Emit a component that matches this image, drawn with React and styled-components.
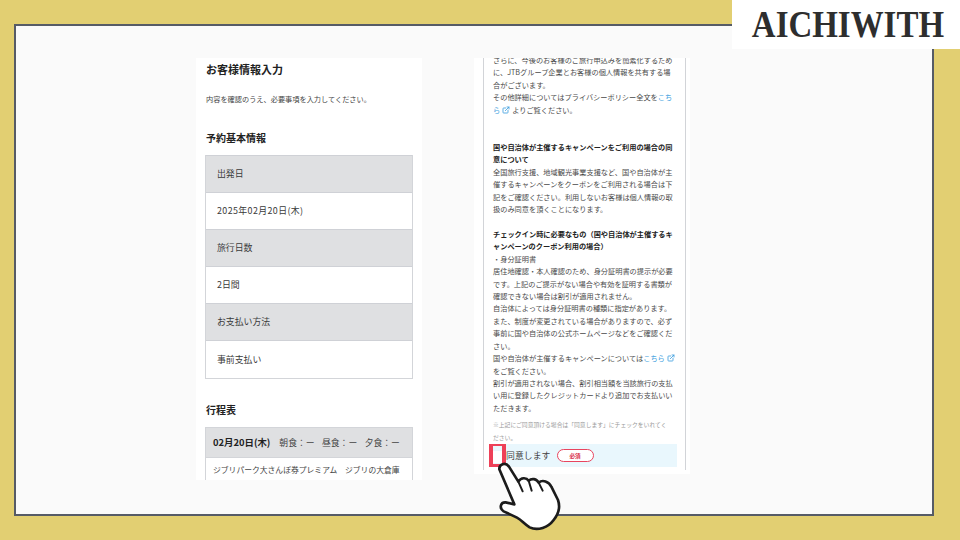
import React from "react";
import styled, { createGlobalStyle } from "styled-components";
import { ExternalLink } from "lucide-react";

const GlobalStyle = createGlobalStyle`
  * {
    box-sizing: border-box;
  }

  html,
  body {
    margin: 0;
    width: 960px;
    height: 540px;
    overflow: hidden;
    background-color: #e2cf72;
    font-family: "Noto Sans CJK JP", "Noto Sans", sans-serif;
  }
`;

const Page = styled.div`
  position: relative;
  width: 960px;
  height: 540px;
  padding: 24px 26px 24px 14px;
`;

const Frame = styled.div`
  position: relative;
  width: 100%;
  height: 100%;
  display: flex;
  align-items: flex-start;
  gap: 52px;
  padding: 32px 0 0 180px;
  background-color: #fafafa;
  border: 2px solid #565b66;
`;

const LogoBox = styled.div`
  position: absolute;
  top: 0;
  right: 0;
  width: 228px;
  height: 49px;
  display: flex;
  align-items: center;
  justify-content: center;
  background-color: #ffffff;
`;

const LogoText = styled.span`
  margin-left: 4px;
  font-family: "Liberation Serif", serif;
  font-size: 37px;
  font-weight: 700;
  line-height: 1;
  color: #2e2e2e;
  transform: scaleX(0.89);
`;

const LeftPanel = styled.section`
  width: 226px;
  height: 422px;
  padding: 0 9px;
  overflow: hidden;
  background-color: #ffffff;
`;

const PageTitle = styled.h1`
  margin: 2px 0 0 1px;
  font-size: 11px;
  line-height: 18px;
  font-weight: 700;
  color: #222222;
`;

const Lead = styled.p`
  margin: 14px 0 0 1px;
  font-size: 7.2px;
  line-height: 14px;
  color: #444444;
`;

const SectionTitle = styled.h2`
  margin: ${(props) => props.$top} 0 0 1px;
  font-size: 10px;
  line-height: 16px;
  font-weight: 700;
  color: #222222;
`;

const InfoTable = styled.div`
  margin-top: 9px;
  width: 208px;
  border: 1px solid #d3d5d9;
  border-top: 0;
`;

const InfoRow = styled.div`
  height: 37.1px;
  display: flex;
  align-items: center;
  padding: 0 0 1px 11px;
  font-size: 8.9px;
  letter-spacing: ${(props) => props.$spacing || "0"};
  color: #3a3a3a;
  border-top: 1px solid #cfd1d6;
  background-color: ${(props) => (props.$head ? "#dfe0e2" : "#ffffff")};
`;

const ScheduleHead = styled.div`
  margin-top: 9px;
  width: 208px;
  height: 30px;
  display: flex;
  align-items: center;
  gap: 9px;
  padding-left: 7px;
  background-color: #dfe0e2;
  border: 1px solid #d3d5d9;
  border-bottom: 0;
  white-space: nowrap;
`;

const ScheduleDate = styled.strong`
  font-size: 9.4px;
  font-weight: 700;
  color: #222222;
`;

const Meals = styled.span`
  font-size: 8.8px;
  color: #444444;
  word-spacing: 5.5px;
`;

const ScheduleBody = styled.div`
  width: 208px;
  height: 30px;
  padding: 5px 0 0 7px;
  border: 1px solid #d3d5d9;
  border-bottom: 0;
  font-size: 7.8px;
  line-height: 14px;
  color: #444444;
  white-space: nowrap;
`;

const RightPanel = styled.section`
  width: 216px;
  height: 416px;
  padding-left: 9px;
  padding-right: 4px;
  overflow: hidden;
  background-color: #ffffff;
`;

const TermsBox = styled.div`
  height: 100%;
  padding: 0 8px 0 9px;
  border-left: 1px solid #d2d4d8;
  border-right: 1px solid #d2d4d8;
`;

const TermsText = styled.div`
  margin-top: -4px;
`;

const Line = styled.div`
  height: 12.43px;
  font-size: 7.2px;
  line-height: 12.43px;
  white-space: nowrap;
  font-weight: ${(props) => (props.$bold ? 700 : 400)};
  color: ${(props) => (props.$bold ? "#222222" : "#4a4a4a")};
`;

const Link = styled.span`
  color: #3d9ede;

  svg {
    margin: 0 2px 0 2px;
    vertical-align: -1px;
  }
`;

const Note = styled.div`
  margin-top: 5px;
  font-size: 5.8px;
  line-height: 12.5px;
  color: #9a9a9a;
  white-space: nowrap;
`;

const AgreeRow = styled.label`
  position: relative;
  width: 187px;
  height: 23px;
  margin-left: -3px;
  display: flex;
  align-items: center;
  padding-left: 16px;
  background-color: #e9f7fd;
`;

const CheckHighlight = styled.span`
  position: absolute;
  top: 0;
  left: -1px;
  width: 17px;
  height: 23px;
  display: flex;
  align-items: center;
  justify-content: center;
  border-style: solid;
  border-color: #ee4058;
  border-width: 2px 4px 3px;
`;

const CheckBox = styled.span`
  width: 9px;
  height: 12px;
  margin-top: 4px;
  background-color: #ffffff;
`;

const AgreeText = styled.span`
  font-size: 8.8px;
  letter-spacing: 0.1px;
  color: #3f3f3f;
`;

const RequiredBadge = styled.span`
  width: 37px;
  height: 13px;
  margin-left: 6px;
  display: flex;
  align-items: center;
  justify-content: center;
  border: 1px solid #e8455f;
  border-radius: 7px;
  background-color: #ffffff;
  font-size: 5.6px;
  font-weight: 700;
  color: #d9304c;
`;

const Pointer = styled.svg`
  position: absolute;
  left: 469px;
  top: 414px;
  width: 85px;
  height: 95px;
`;

const basicInfo = [
  { label: "出発日", head: true },
  { label: "2025年02月20日(木)", spacing: "0.4px" },
  { label: "旅行日数", head: true },
  { label: "2日間" },
  { label: "お支払い方法", head: true },
  { label: "事前支払い" },
];

const HandIcon = () => (
  <Pointer viewBox="0 0 255 285" fill="none">
    <path
      d="M43 88 C42 74 60 64 72 80 L100 125 C108 112 124 112 131 122 C140 114 155 116 161 128 C172 118 192 124 199 140 L219 180 C226 200 222 220 206 240 C190 262 158 274 134 262 C118 252 110 240 96 233 L56 214 C42 205 46 186 62 187 L88 193 Z"
      fill="#ffffff"
      stroke="#1c1c1c"
      strokeWidth="8"
      strokeLinejoin="round"
    />
    <path
      d="M100 125 L113 154 M131 122 L140 152 M161 128 L173 152"
      stroke="#1c1c1c"
      strokeWidth="6"
      strokeLinecap="round"
    />
  </Pointer>
);

const App = () => {
  return (
    <Page>
      <GlobalStyle />
      <Frame>
        <LeftPanel>
          <PageTitle>お客様情報入力</PageTitle>
          <Lead>内容を確認のうえ、必要事項を入力してください。</Lead>
          <SectionTitle $top="24px">予約基本情報</SectionTitle>
          <InfoTable>
            {basicInfo.map((row) => (
              <InfoRow key={row.label} $head={row.head} $spacing={row.spacing}>
                {row.label}
              </InfoRow>
            ))}
          </InfoTable>
          <SectionTitle $top="23px">行程表</SectionTitle>
          <ScheduleHead>
            <ScheduleDate>02月20日(木)</ScheduleDate>
            <Meals>朝食：ー 昼食：ー 夕食：ー</Meals>
          </ScheduleHead>
          <ScheduleBody>
            ジブリパーク大さんぽ券プレミアム　ジブリの大倉庫
          </ScheduleBody>
        </LeftPanel>

        <RightPanel>
          <TermsBox>
            <TermsText>
              <Line>さらに、今後のお客様のご旅行申込みを簡素化するため</Line>
              <Line>に、JTBグループ企業とお客様の個人情報を共有する場</Line>
              <Line>合がございます。</Line>
              <Line>
                その他詳細についてはプライバシーポリシー全文を<Link>こち</Link>
              </Line>
              <Line>
                <Link>
                  ら<ExternalLink size={8} strokeWidth={2.5} />
                </Link>
                よりご覧ください。
              </Line>
              <Line />
              <Line />
              <Line $bold>国や自治体が主催するキャンペーンをご利用の場合の同</Line>
              <Line $bold>意について</Line>
              <Line>全国旅行支援、地域観光事業支援など、国や自治体が主</Line>
              <Line>催するキャンペーンをクーポンをご利用される場合は下</Line>
              <Line>記をご確認ください。利用しないお客様は個人情報の取</Line>
              <Line>扱のみ同意を頂くことになります。</Line>
              <Line />
              <Line $bold>チェックイン時に必要なもの（国や自治体が主催するキ</Line>
              <Line $bold>ャンペーンのクーポン利用の場合）</Line>
              <Line>・身分証明書</Line>
              <Line>居住地確認・本人確認のため、身分証明書の提示が必要</Line>
              <Line>です。上記のご提示がない場合や有効を証明する書類が</Line>
              <Line>確認できない場合は割引が適用されません。</Line>
              <Line>自治体によっては身分証明書の種類に指定があります。</Line>
              <Line>また、制度が変更されている場合がありますので、必ず</Line>
              <Line>事前に国や自治体の公式ホームページなどをご確認くだ</Line>
              <Line>さい。</Line>
              <Line>
                国や自治体が主催するキャンペーンについては
                <Link>
                  こちら
                  <ExternalLink size={8} strokeWidth={2.5} />
                </Link>
              </Line>
              <Line>をご覧ください。</Line>
              <Line>割引が適用されない場合、割引相当額を当該旅行の支払</Line>
              <Line>い用に登録したクレジットカードより追加でお支払いい</Line>
              <Line>ただきます。</Line>
            </TermsText>
            <Note>
              ※上記にご同意頂ける場合は「同意します」にチェックをいれてく
              <br />
              ださい。
            </Note>
            <AgreeRow>
              <CheckHighlight>
                <CheckBox />
              </CheckHighlight>
              <AgreeText>同意します</AgreeText>
              <RequiredBadge>必須</RequiredBadge>
            </AgreeRow>
          </TermsBox>
        </RightPanel>

        <HandIcon />
      </Frame>
      <LogoBox>
        <LogoText>AICHIWITH</LogoText>
      </LogoBox>
    </Page>
  );
};

export default App;
